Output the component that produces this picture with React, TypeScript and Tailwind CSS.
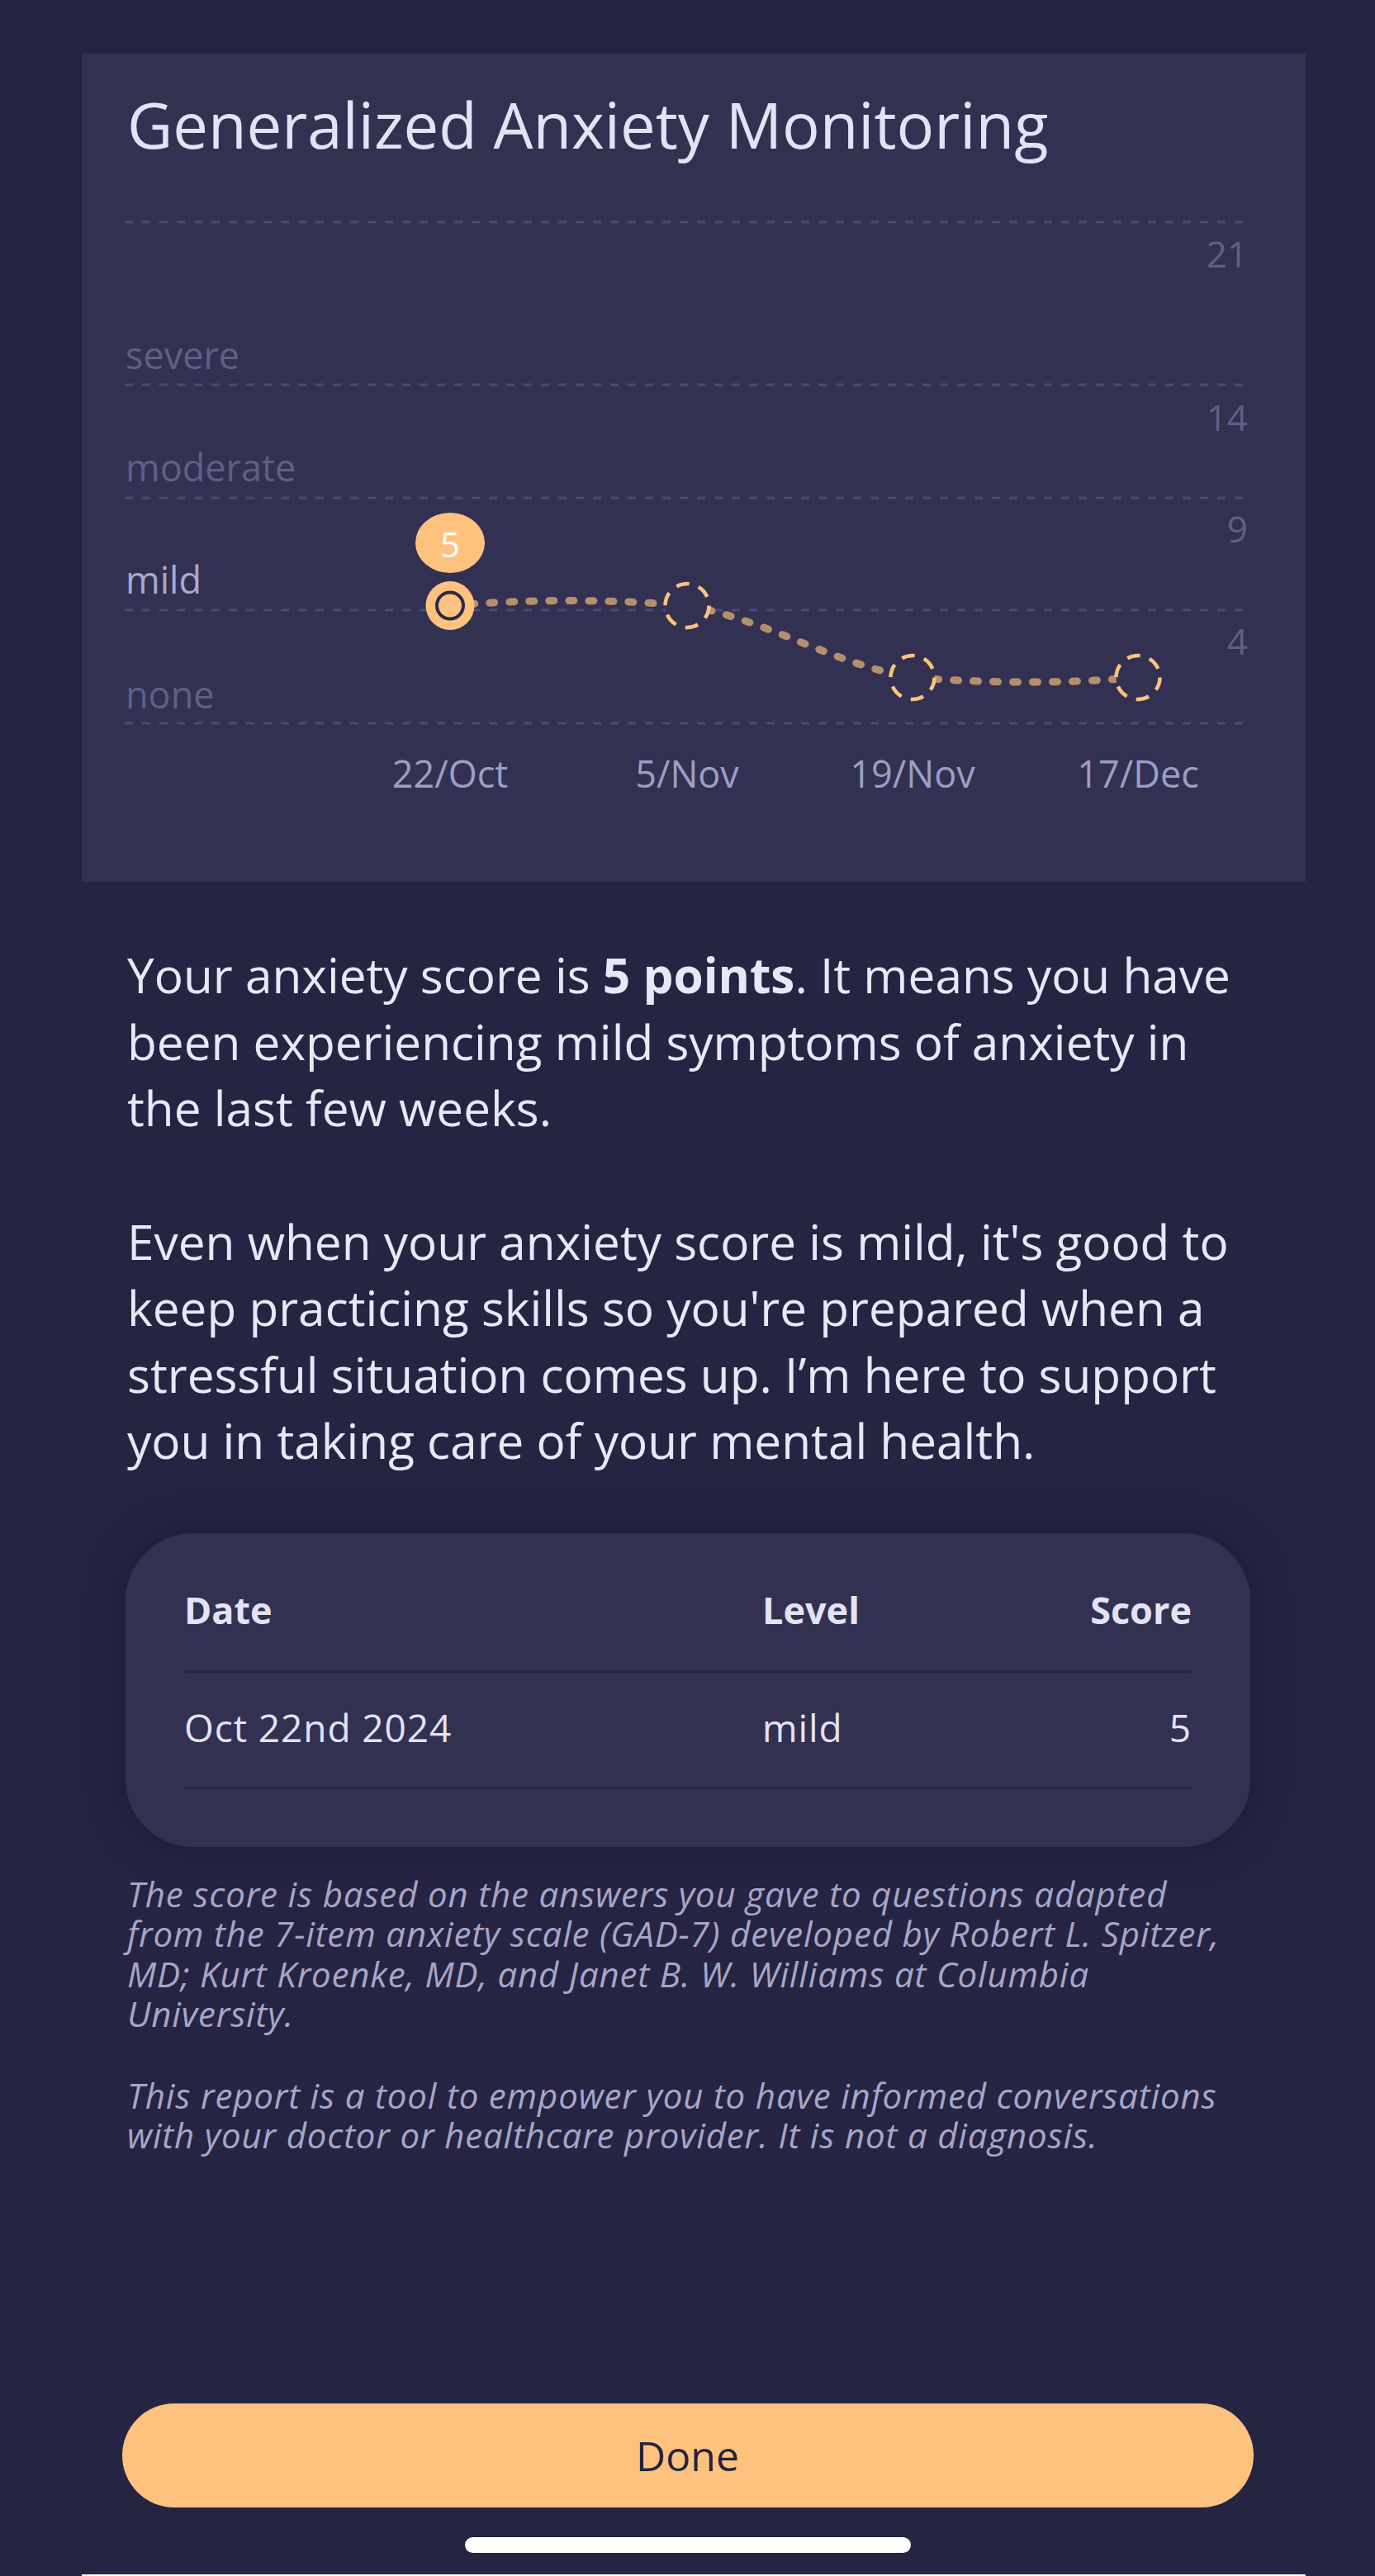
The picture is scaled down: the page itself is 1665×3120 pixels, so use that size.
import React from "react";

const ORANGE = "#fec27f";
const CARD = "#323152";
const FONT = "'Open Sans', Lato, sans-serif";

// chart coordinates are relative to the svg, which sits 180px below the card top
const gridY = [24, 221, 358, 494, 631];
const scoreLabels = [
  { label: "21", y: 62 },
  { label: "14", y: 260 },
  { label: "9", y: 395 },
  { label: "4", y: 531 },
];
const levelLabels = [
  { label: "severe", y: 184, active: false },
  { label: "moderate", y: 320, active: false },
  { label: "mild", y: 456, active: true },
  { label: "none", y: 595, active: false },
];
const points = [
  { x: 446, y: 488.5, date: "22/Oct" },
  { x: 733, y: 488.5, date: "5/Nov" },
  { x: 1006, y: 575.5, date: "19/Nov" },
  { x: 1279, y: 575.5, date: "17/Dec" },
];

function AnxietyChart() {
  return (
    <svg width="1482" height="740" viewBox="0 0 1482 740" className="block">
      {gridY.map((y) => (
        <line
          key={y}
          x1="52"
          x2="1415"
          y1={y}
          y2={y}
          stroke="#4a4979"
          strokeWidth="3"
          strokeDasharray="10 11"
        />
      ))}
      {scoreLabels.map((s) => (
        <text
          key={s.label}
          x="1412"
          y={s.y}
          textAnchor="end"
          dominantBaseline="central"
          fill="#5f5f86"
          fontSize="44"
          fontFamily={FONT}
        >
          {s.label}
        </text>
      ))}
      {levelLabels.map((l) => (
        <text
          key={l.label}
          x="53"
          y={l.y}
          dominantBaseline="central"
          fill={l.active ? "#a9a9cd" : "#5f5f86"}
          fontSize="45"
          fontFamily={FONT}
        >
          {l.label}
        </text>
      ))}
      {points.map((p) => (
        <text
          key={p.date}
          x={p.x}
          y="691"
          textAnchor="middle"
          dominantBaseline="central"
          fill="#9d9ec6"
          fontSize="45"
          fontFamily={FONT}
        >
          {p.date}
        </text>
      ))}

      <path
        d="M446 488.5 C540 480.5 640 480.5 733 488.5 C830 505 910 560 1006 575.5 C1100 583 1190 583 1279 575.5"
        fill="none"
        stroke="#b48f6d"
        strokeWidth="9"
        strokeLinecap="round"
        strokeDasharray="6 18"
      />

      {points.slice(1).map((p) => (
        <circle
          key={p.date}
          cx={p.x}
          cy={p.y}
          r="26.5"
          fill={CARD}
          stroke={ORANGE}
          strokeWidth="4.5"
          strokeDasharray="16 11.7"
        />
      ))}

      <circle cx="446" cy="488.5" r="29.5" fill={ORANGE} />
      <circle cx="446" cy="488.5" r="16" fill={ORANGE} stroke="#2b2947" strokeWidth="4" />

      <ellipse cx="446" cy="412.5" rx="42" ry="36.5" fill={ORANGE} />
      <text
        x="446"
        y="413"
        textAnchor="middle"
        dominantBaseline="central"
        fill="#ffffff"
        fontSize="42"
        fontFamily={FONT}
      >
        5
      </text>
    </svg>
  );
}

export default function App() {
  return (
    <div
      className="w-[1665px] h-[3120px] bg-[#262443] flex flex-col overflow-hidden"
      style={{ fontFamily: FONT }}
    >
      <div className="ml-[99px] w-[1482px] mt-[65px] h-[1003px] bg-[#323152] flex flex-col">
        <h1 className="pl-[55px] pt-[40px] h-[180px] text-[76px] leading-[92px] text-[#e3e3f6]">
          Generalized Anxiety Monitoring
        </h1>
        <AnxietyChart />
      </div>

      <div className="px-[154px] mt-[72px] text-[58.5px] leading-[80.5px] text-[#e8e8f8]">
        <p>
          Your anxiety score is <span className="font-bold">5 points</span>. It means you have
          <br />
          been experiencing mild symptoms of anxiety in
          <br />
          the last few weeks.
        </p>
        <p className="mt-[81px]">
          Even when your anxiety score is mild, it's good to
          <br />
          keep practicing skills so you're prepared when a
          <br />
          stressful situation comes up. I’m here to support
          <br />
          you in taking care of your mental health.
        </p>
      </div>

      <div className="ml-[152px] w-[1362px] mt-[72px] h-[380px] rounded-[82px] bg-[#323152] px-[71px] pt-[65px] shadow-[0_0_50px_rgba(18,16,38,0.45)]">
        <div className="grid grid-cols-[700px_1fr_auto] text-[45px] leading-[56px] font-bold text-[#e2e3f5] pb-[45px] border-b-[3px] border-[#292743]">
          <div>Date</div>
          <div>Level</div>
          <div className="text-right">Score</div>
        </div>
        <div className="grid grid-cols-[700px_1fr_auto] text-[46px] leading-[56px] tracking-[0.02em] text-[#e2e3f5] pt-[38px] pb-[44px] border-b-[3px] border-[#292743]">
          <div>Oct 22nd 2024</div>
          <div>mild</div>
          <div className="text-right">5</div>
        </div>
      </div>

      <div className="px-[154px] mt-[33px] text-[42px] leading-[48.5px] tracking-[0.02em] italic text-[#a7a6c8]">
        <p>
          The score is based on the answers you gave to questions adapted
          <br />
          from the 7-item anxiety scale (GAD-7) developed by Robert L. Spitzer,
          <br />
          MD; Kurt Kroenke, MD, and Janet B. W. Williams at Columbia
          <br />
          University.
        </p>
        <p className="mt-[50px]">
          This report is a tool to empower you to have informed conversations
          <br />
          with your doctor or healthcare provider. It is not a diagnosis.
        </p>
      </div>

      <div className="mt-auto flex flex-col items-center">
        <button className="w-[1370px] h-[126px] rounded-full bg-[#fec27f] text-[50px] text-[#25233f]">
          Done
        </button>
        <div className="mt-[36px] w-[540px] h-[19px] rounded-full bg-white" />
        <div className="mt-[26px] ml-[99px] self-start w-[1482px] h-[2px] bg-white" />
      </div>
    </div>
  );
}
